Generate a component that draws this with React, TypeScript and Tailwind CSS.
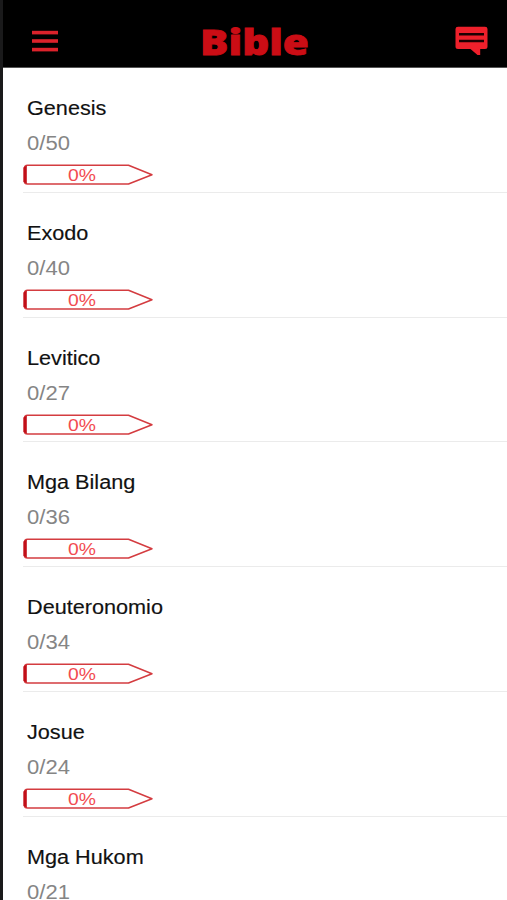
interface Book {
  name: string;
  read: number;
  total: number;
}

const books: Book[] = [
  { name: "Genesis", read: 0, total: 50 },
  { name: "Exodo", read: 0, total: 40 },
  { name: "Levitico", read: 0, total: 27 },
  { name: "Mga Bilang", read: 0, total: 36 },
  { name: "Deuteronomio", read: 0, total: 34 },
  { name: "Josue", read: 0, total: 24 },
  { name: "Mga Hukom", read: 0, total: 21 },
];

function ProgressPencil({ percent }: { percent: number }) {
  return (
    <div className="relative h-[22px] w-[131px]">
      <svg className="block" width="131" height="22" viewBox="0 0 131 22" fill="none">
        <path
          d="M4.5 1.2H105.5L129 10.7L105.5 20H4.5Q1.5 20 1.5 17.5V4Q1.5 1.2 4.5 1.2Z"
          stroke="#d43c40"
          strokeWidth="1.5"
          strokeLinejoin="round"
        />
        <path d="M.4 3.6L3.8 1.6V19.6L.4 18Z" fill="#c20f18" />
      </svg>
      <span className="absolute left-[45px] top-0 origin-left scale-x-[1.11] text-[17.4px] leading-[22px] text-[#f24b50]">
        {percent}%
      </span>
    </div>
  );
}

function BookRow({ book }: { book: Book }) {
  return (
    <li className="ml-5 h-[124.8px] shrink-0 border-b border-[#ebebeb] pt-7">
      <p className="ml-[4.4px] w-fit origin-left scale-x-[1.11] text-[19.5px] leading-6 text-[#111] [-webkit-text-stroke:0.15px_#111]">
        {book.name}
      </p>
      <p className="ml-[4.4px] mt-[11px] w-fit origin-left scale-x-[1.13] text-[19.5px] leading-6 text-[#858585]">
        {book.read}/{book.total}
      </p>
      <div className="mt-[9px]">
        <ProgressPencil percent={Math.round((book.read / book.total) * 100)} />
      </div>
    </li>
  );
}

export default function App() {
  return (
    <div className="flex h-[900px] w-[507px] flex-col overflow-hidden border-l-[3px] border-[#1a1a1b] bg-white font-['Liberation_Sans',Arial,sans-serif]">
      <header className="flex h-[68px] shrink-0 items-start justify-between border-b border-[#555] bg-black pl-[29px] pr-[19px]">
        <button aria-label="Menu" className="mt-[30px]">
          <svg className="block" width="26" height="22" viewBox="0 0 26 22" fill="#dc222b">
            <rect y="0.8" width="26" height="3.6" />
            <rect y="9.2" width="26" height="3.6" />
            <rect y="17.8" width="26" height="3.6" />
          </svg>
        </button>
        <h1 className="mr-[3px] mt-[18px] origin-center scale-x-[1.17] font-['Open_Sans',sans-serif] text-[36px] font-extrabold leading-[48px] text-[#cb0d15] [-webkit-text-stroke:0.8px_#cb0d15]">
          Bible
        </h1>
        <button aria-label="Comments" className="mt-[26px]">
          <svg className="block" width="33" height="30" viewBox="0 0 33 30">
            <path
              d="M3 .7H30Q32.5 .7 32.5 3V20.5Q32.5 23 30 23H25.2V29L22.5 29L15.5 23H3Q.5 23 .5 20.5V3Q.5 .7 3 .7Z"
              fill="#ee202b"
            />
            <path d="M4 8.3H29M4 15H29" stroke="#1c0002" strokeWidth="2.4" />
          </svg>
        </button>
      </header>
      <ul className="flex flex-col">
        {books.map((book) => (
          <BookRow key={book.name} book={book} />
        ))}
      </ul>
    </div>
  );
}
